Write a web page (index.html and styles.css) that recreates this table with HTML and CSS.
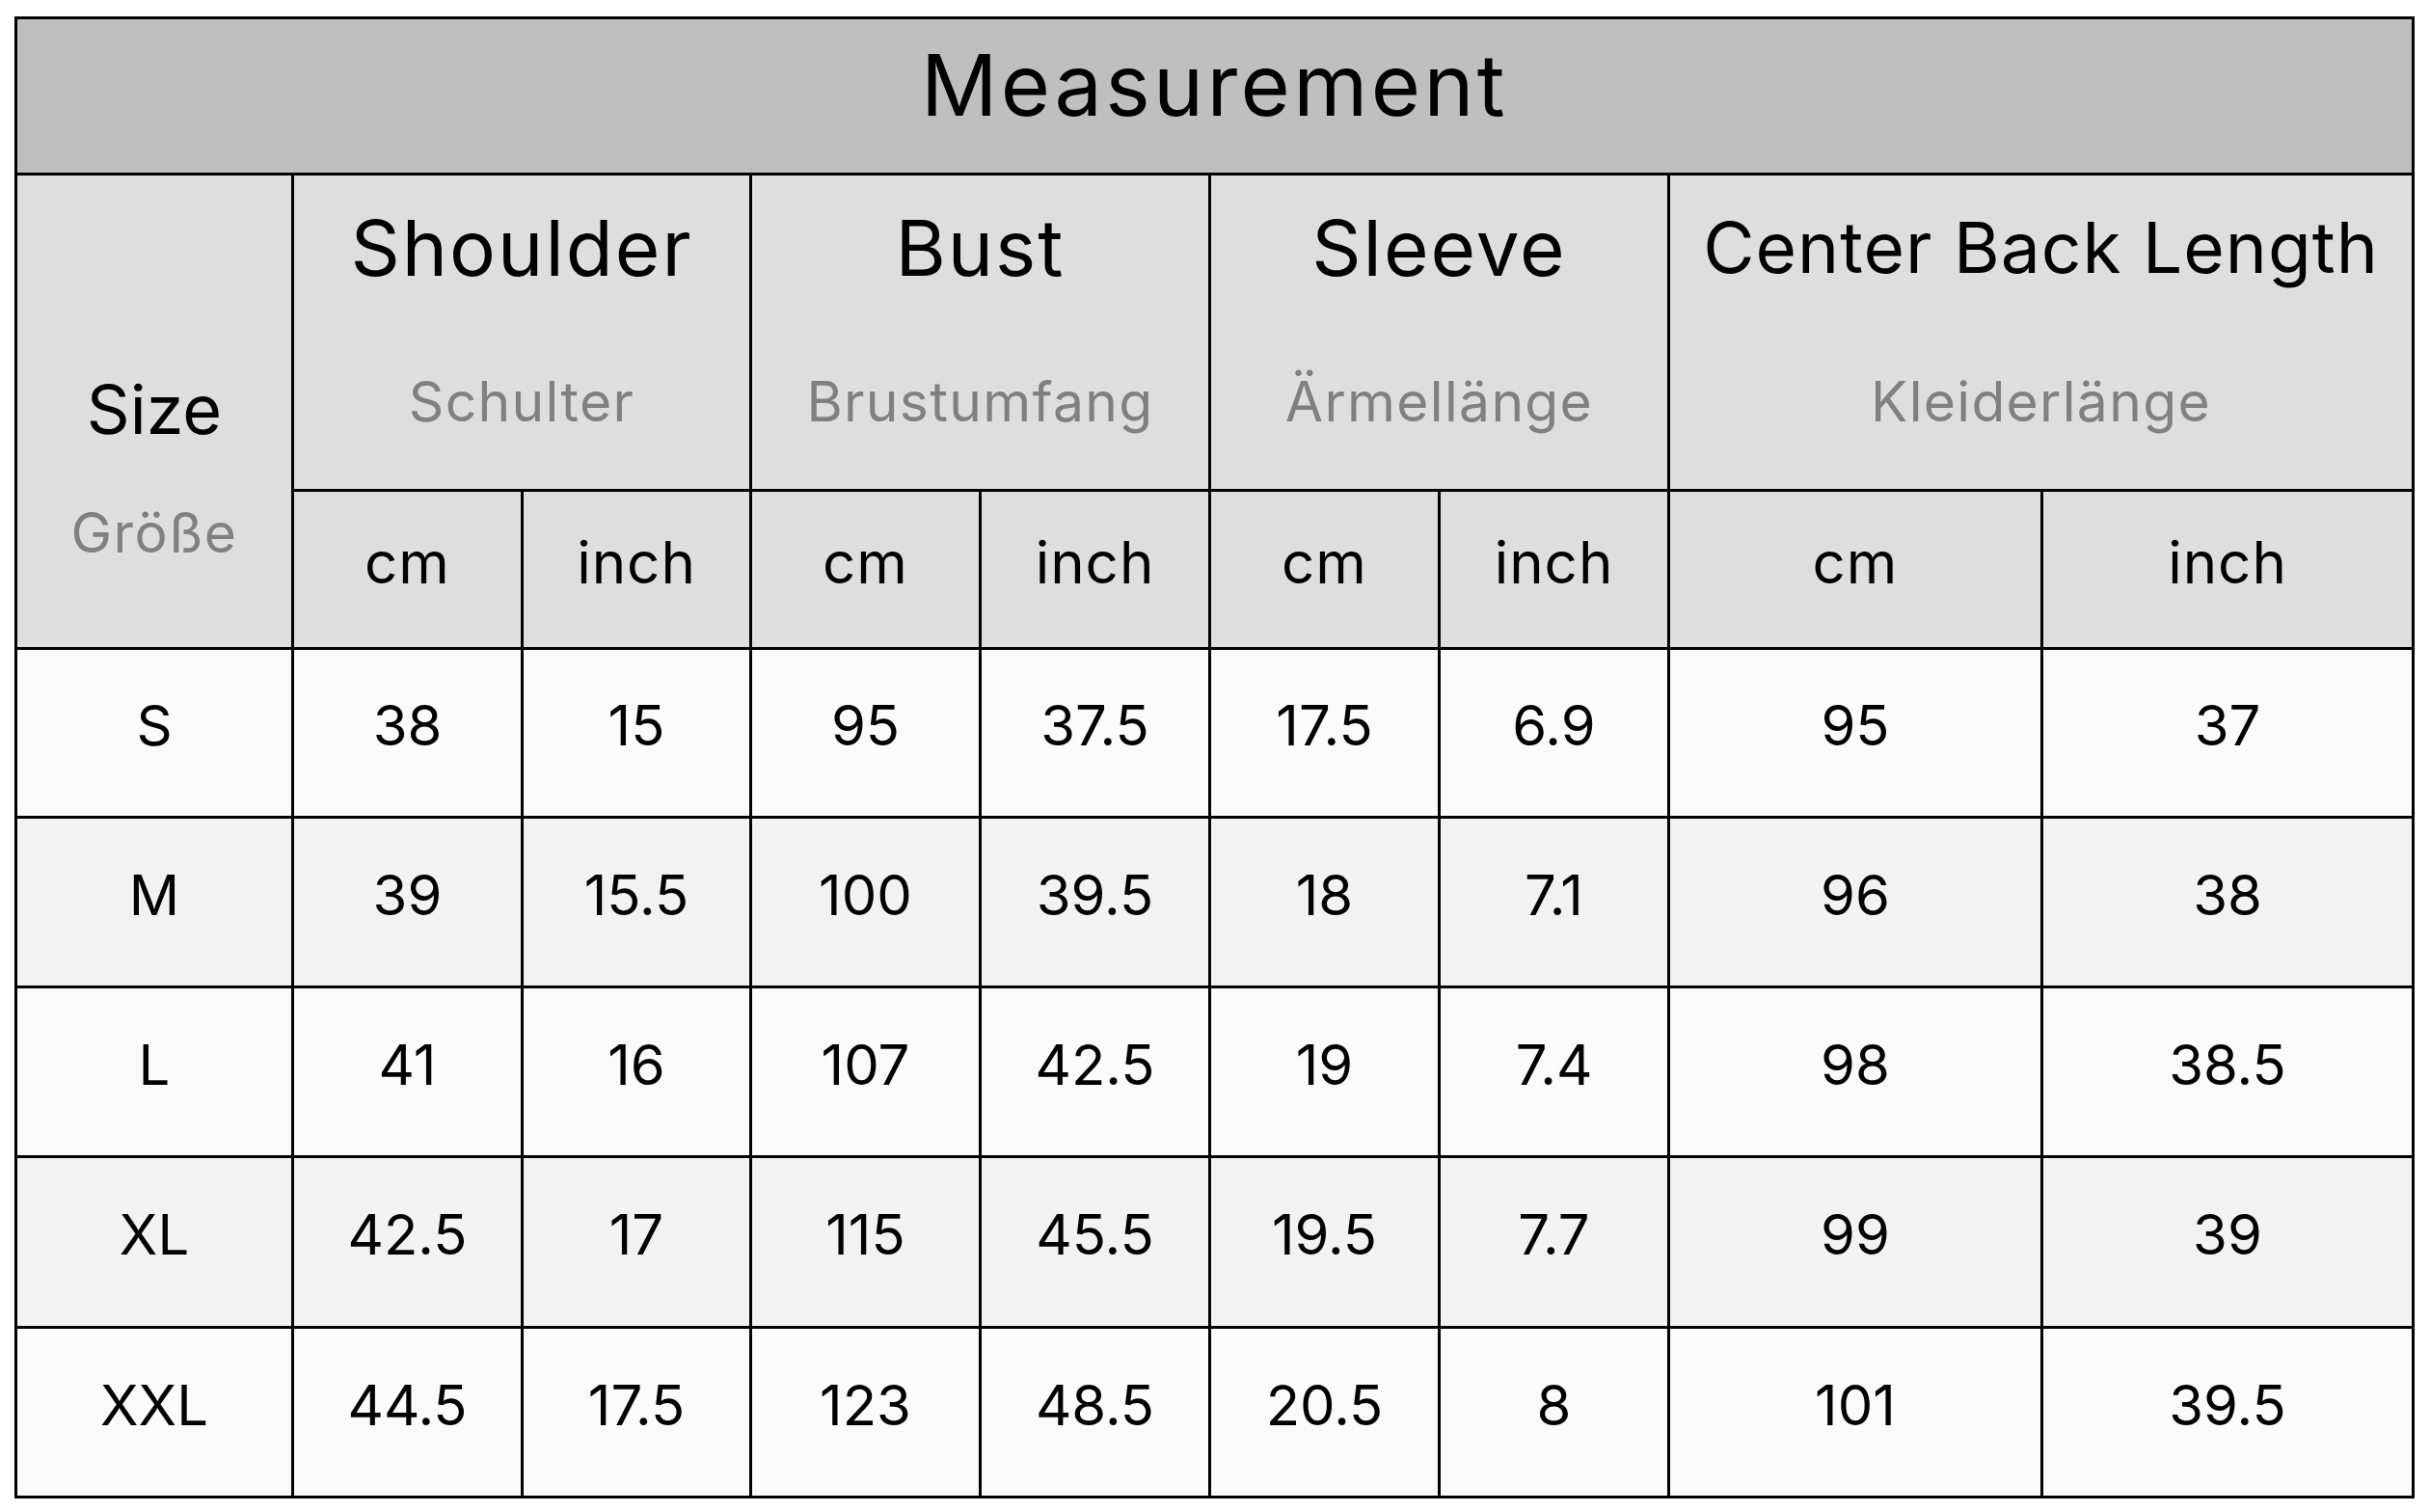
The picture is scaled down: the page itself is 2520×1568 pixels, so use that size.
FILE: index.html
```html
<!DOCTYPE html>
<html lang="de">
<head>
<meta charset="utf-8">
<title>Measurement</title>
<link rel="stylesheet" href="styles.css">
</head>
<body>
<div class="page">
  <div class="chart">
    <div class="cell title">Measurement</div>

    <div class="cell size-head">
      <div class="size-en">Size</div>
      <div class="size-de">Größe</div>
    </div>
    <div class="cell group"><div class="g-en">Shoulder</div><div class="g-de">Schulter</div></div>
    <div class="cell group"><div class="g-en">Bust</div><div class="g-de">Brustumfang</div></div>
    <div class="cell group"><div class="g-en">Sleeve</div><div class="g-de">Ärmellänge</div></div>
    <div class="cell group"><div class="g-en g-en-long">Center Back Length</div><div class="g-de">Kleiderlänge</div></div>

    <div class="cell unit">cm</div><div class="cell unit">inch</div>
    <div class="cell unit">cm</div><div class="cell unit">inch</div>
    <div class="cell unit">cm</div><div class="cell unit">inch</div>
    <div class="cell unit">cm</div><div class="cell unit">inch</div>

    <div class="cell data odd">S</div><div class="cell data odd">38</div><div class="cell data odd">15</div><div class="cell data odd">95</div><div class="cell data odd">37.5</div><div class="cell data odd">17.5</div><div class="cell data odd">6.9</div><div class="cell data odd">95</div><div class="cell data odd">37</div>

    <div class="cell data even">M</div><div class="cell data even">39</div><div class="cell data even">15.5</div><div class="cell data even">100</div><div class="cell data even">39.5</div><div class="cell data even">18</div><div class="cell data even">7.1</div><div class="cell data even">96</div><div class="cell data even">38</div>

    <div class="cell data odd">L</div><div class="cell data odd">41</div><div class="cell data odd">16</div><div class="cell data odd">107</div><div class="cell data odd">42.5</div><div class="cell data odd">19</div><div class="cell data odd">7.4</div><div class="cell data odd">98</div><div class="cell data odd">38.5</div>

    <div class="cell data even">XL</div><div class="cell data even">42.5</div><div class="cell data even">17</div><div class="cell data even">115</div><div class="cell data even">45.5</div><div class="cell data even">19.5</div><div class="cell data even">7.7</div><div class="cell data even">99</div><div class="cell data even">39</div>

    <div class="cell data odd">XXL</div><div class="cell data odd">44.5</div><div class="cell data odd">17.5</div><div class="cell data odd">123</div><div class="cell data odd">48.5</div><div class="cell data odd">20.5</div><div class="cell data odd">8</div><div class="cell data odd">101</div><div class="cell data odd">39.5</div>
  </div>
</div>
</body>
</html>
```

FILE: styles.css
```css
html, body {
  margin: 0;
  padding: 0;
  background: #ffffff;
}

.page {
  padding: 17px 0 0 15px;
  font-family: Inter, "Liberation Sans", Arial, sans-serif;
  color: #000000;
}

.chart {
  display: grid;
  width: max-content;
  grid-template-columns: 284px 235px 234px 235px 235px 235px 235px 384px 382px;
  grid-template-rows: 159px 325px 161px 172px 173px 173px 174px 173px;
  gap: 3px;
  padding: 3px;
  background: #000000;
}

.cell {
  display: flex;
  align-items: center;
  justify-content: center;
  text-align: center;
  white-space: nowrap;
  box-sizing: border-box;
}

.title {
  grid-column: 1 / -1;
  background: #bfbfbf;
  font-size: 88px;
  letter-spacing: 3.4px;
  padding-bottom: 24px;
}

.size-head {
  grid-row: 2 / span 2;
  grid-column: 1;
  background: #dedede;
  flex-direction: column;
  justify-content: flex-start;
}

.size-en {
  font-size: 70px;
  line-height: 90px;
  margin-top: 198px;
}

.size-de {
  font-size: 57px;
  letter-spacing: 1.5px;
  line-height: 70px;
  margin-top: 48px;
  color: #808080;
}

.group {
  grid-column: span 2;
  background: #dedede;
  flex-direction: column;
  justify-content: flex-start;
}

.g-en {
  font-size: 80px;
  letter-spacing: 2px;
  line-height: 150px;
}

.g-en-long {
  font-size: 73px;
  letter-spacing: 1px;
}

.g-de {
  font-size: 57px;
  letter-spacing: 1.3px;
  line-height: 170px;
  color: #808080;
}

.unit {
  background: #dedede;
  font-size: 60px;
  letter-spacing: 1px;
  padding-bottom: 16px;
}

.data {
  font-size: 58px;
  padding-bottom: 16px;
}

.odd {
  background: #fafafa;
}

.even {
  background: #f2f2f2;
}
```
